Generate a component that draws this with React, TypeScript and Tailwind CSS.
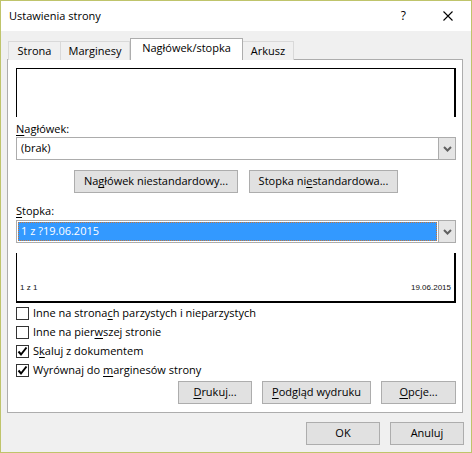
import React from "react"

// Access-key letter, underlined like a Windows dialog.
function K({ children }: { children: React.ReactNode }) {
  return <span className="underline decoration-1 underline-offset-[2px]">{children}</span>
}

function Btn({
  children,
  className = "",
}: {
  children: React.ReactNode
  className?: string
}) {
  return (
    <div
      className={
        "flex h-[23px] items-center justify-center border border-[#adadad] bg-[#e1e1e1] text-[11px] text-black " +
        className
      }
    >
      {children}
    </div>
  )
}

function Chevron() {
  return (
    <svg width="9" height="6" viewBox="0 0 9 6">
      <path d="M1 1 L4.5 4.5 L8 1" fill="none" stroke="#606060" strokeWidth="2" />
    </svg>
  )
}

function Select({ value, selected }: { value: string; selected?: boolean }) {
  return (
    <div className="flex h-[23px] border border-[#acacac] bg-white">
      <div className="flex flex-1 p-[1px]">
        {selected ? (
          <div className="flex flex-1 items-center border border-dotted border-[#c87533] bg-[#3399ff] pl-[2px] text-[11px] text-white">
            {value}
          </div>
        ) : (
          <div className="flex flex-1 items-center pl-[3px] text-[11px] text-black">{value}</div>
        )}
      </div>
      <div className="flex w-[17px] items-center justify-center border-l border-[#acacac] bg-[#e5e5e5]">
        <Chevron />
      </div>
    </div>
  )
}

function Check({ checked, children }: { checked?: boolean; children: React.ReactNode }) {
  return (
    <div className="flex h-[19px] items-center gap-[4px]">
      <div className="flex h-[13px] w-[13px] items-center justify-center border border-[#333333] bg-white">
        {checked && (
          <svg width="11" height="11" viewBox="0 0 11 11">
            <path d="M1.5 5.5 L4 8.5 L9.5 1.5" fill="none" stroke="#000" strokeWidth="2" />
          </svg>
        )}
      </div>
      <span className="text-[11px] text-black">{children}</span>
    </div>
  )
}

export default function App() {
  return (
    <div className="flex h-[453px] w-[472px] flex-col border border-[#bfc46b] bg-[#f0f0f0] font-['Segoe_UI','Open_Sans',sans-serif] text-black">
      {/* Title bar */}
      <div className="flex h-[30px] items-center bg-white pl-[8px] pr-[18px]">
        <span className="text-[11px]">Ustawienia strony</span>
        <span className="ml-auto mr-[37px] text-[12px]">?</span>
        <svg width="10" height="10" viewBox="0 0 10 10">
          <path d="M0.5 0.5 L9.5 9.5 M9.5 0.5 L0.5 9.5" stroke="#000" strokeWidth="1.1" />
        </svg>
      </div>

      <div className="flex flex-1 flex-col px-[6px] pt-[7px]">
        {/* Tabs */}
        <div className="relative z-10 -mb-[1px] ml-[1px] flex h-[22px] items-end text-[11px]">
          <div className="flex h-[19px] w-[53px] items-center justify-center border border-b-0 border-[#d9d9d9] bg-[#f0f0f0]">
            Strona
          </div>
          <div className="flex h-[19px] w-[69px] items-center justify-center border border-b-0 border-l-0 border-[#d9d9d9] bg-[#f0f0f0]">
            Marginesy
          </div>
          <div className="flex h-[22px] w-[113px] items-center justify-center border border-b-0 border-[#adadad] bg-white pb-[2px]">
            Nagłówek/stopka
          </div>
          <div className="flex h-[19px] w-[51px] items-center justify-center border border-b-0 border-l-0 border-[#d9d9d9] bg-[#f0f0f0]">
            Arkusz
          </div>
        </div>

        {/* Panel */}
        <div className="flex h-[354px] w-[456px] flex-col border border-[#adadad] bg-white pl-[8px] pr-[6px] pt-[8px]">
          <div className="h-[49px] border-l border-r-2 border-t border-black" />

          <div className="mt-[4px] h-[16px] text-[11px] leading-[16px]">
            <K>N</K>agłówek:
          </div>
          <Select value="(brak)" />

          <div className="mt-[10px] flex justify-center gap-[11px]">
            <Btn className="w-[164px]">
              Na<K>g</K>łówek niestandardowy...
            </Btn>
            <Btn className="w-[149px]">
              Stopka ni<K>e</K>standardowa...
            </Btn>
          </div>

          <div className="mt-[10px] h-[16px] text-[11px] leading-[16px]">
            <K>S</K>topka:
          </div>
          <div className="mt-[1px]">
            <Select value="1 z ?19.06.2015" selected />
          </div>

          <div className="mt-[10px] flex h-[50px] items-end justify-between border-b-2 border-l border-r-2 border-black px-[3px] pb-[8px] font-['Liberation_Sans',sans-serif] text-[8px] leading-[10px] text-[#111]">
            <span>1 z 1</span>
            <span>19.06.2015</span>
          </div>

          <div className="mt-[1px] flex flex-col">
            <Check>
              Inne na strona<K>c</K>h parzystych i nieparzystych
            </Check>
            <Check>
              Inne na pier<K>w</K>szej stronie
            </Check>
            <Check checked>
              S<K>k</K>aluj z dokumentem
            </Check>
            <Check checked>
              Wyrównaj do <K>m</K>arginesów strony
            </Check>
          </div>

          <div className="mt-[1px] flex justify-end gap-[10px]">
            <Btn className="h-[22px] w-[74px]">
              <K>D</K>rukuj...
            </Btn>
            <Btn className="h-[22px] w-[109px]">
              <K>P</K>odgląd wydruku
            </Btn>
            <Btn className="h-[22px] w-[75px]">
              <K>O</K>pcje...
            </Btn>
          </div>
        </div>

        {/* Dialog buttons */}
        <div className="mt-[9px] flex justify-end gap-[10px] pr-[1px]">
          <Btn className="w-[74px] border-[#3c9cf0]">OK</Btn>
          <Btn className="w-[74px]">Anuluj</Btn>
        </div>
      </div>
    </div>
  )
}
